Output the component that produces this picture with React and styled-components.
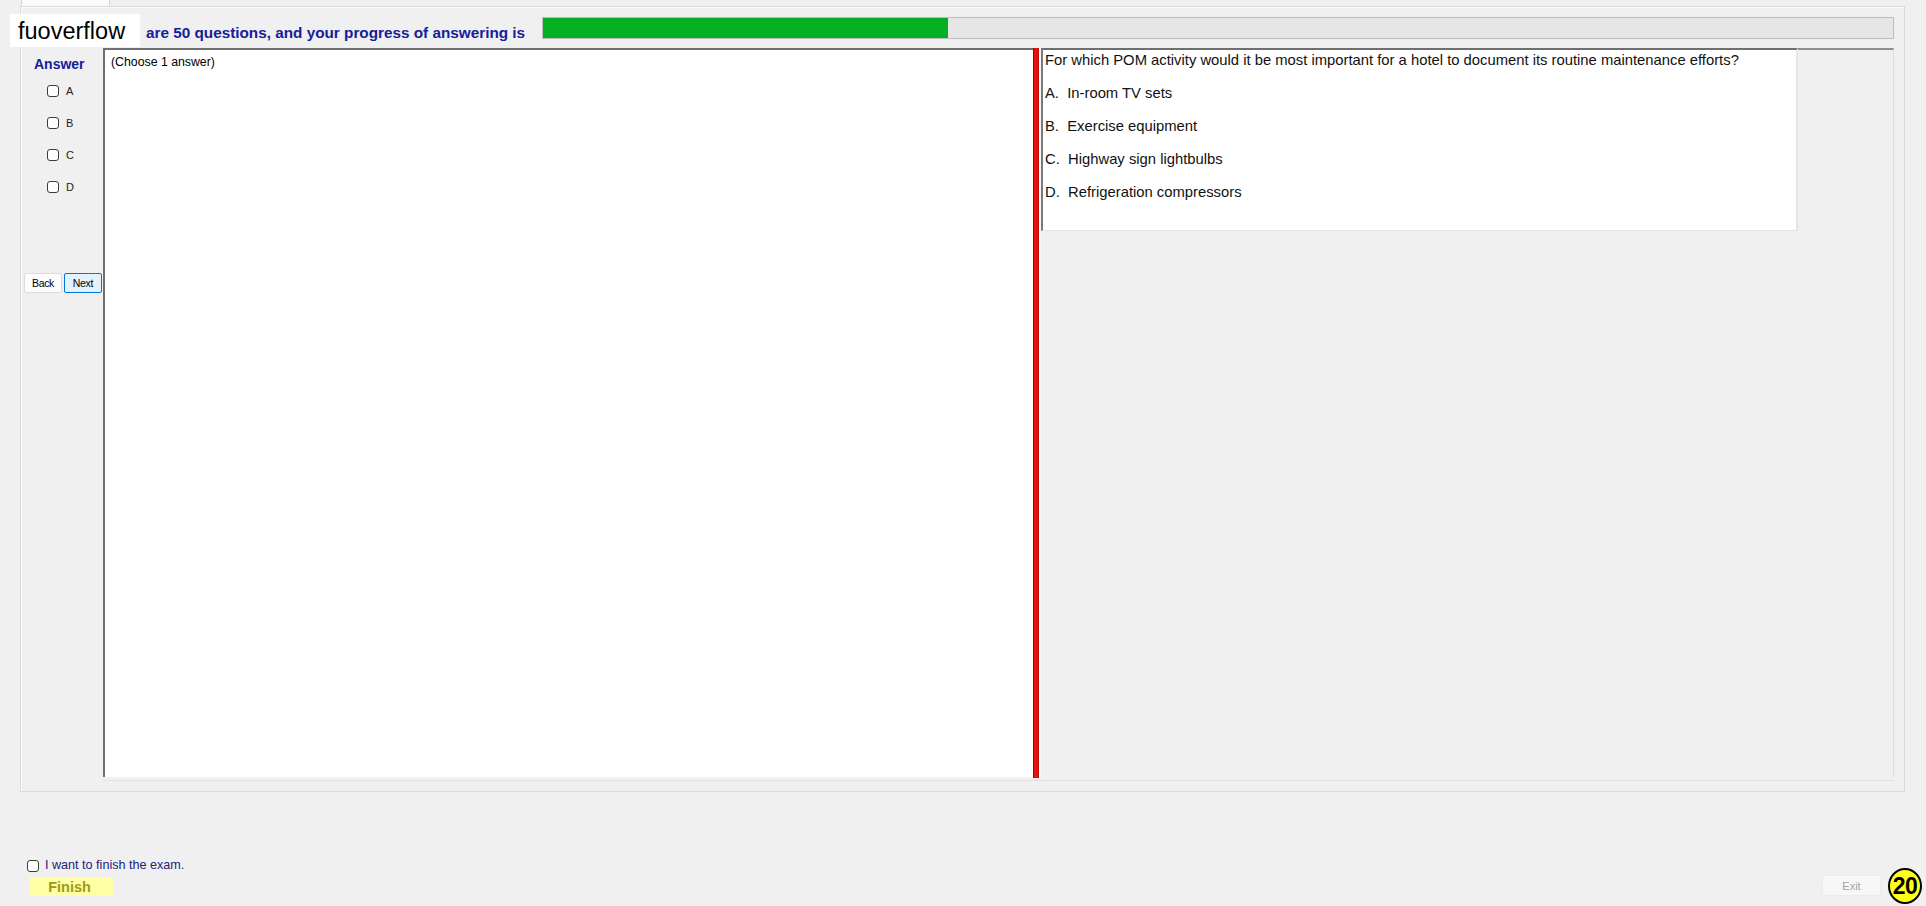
import React from "react";
import styled, { createGlobalStyle } from "styled-components";

const Global = createGlobalStyle`
  html, body { margin: 0; padding: 0; background: #f0f0f0; }
  body { font-family: "Liberation Sans", Arial, sans-serif; }
  * { box-sizing: border-box; }
`;

const Page = styled.div`
  position: relative;
  width: 1926px;
  height: 906px;
  background: #f0f0f0;
  display: flex;
  flex-direction: column;
  overflow: hidden;
  color: #000;
`;

const TabStrip = styled.div`
  height: 6px;
  display: flex;
  padding-left: 21px;
`;

const TabHead = styled.div`
  width: 89px;
  height: 6px;
  background: #fafafa;
  border-left: 1px solid #d6d6d6;
  border-right: 1px solid #d6d6d6;
`;

const TabPage = styled.section`
  margin-left: 20px;
  width: 1885px;
  height: 786px;
  border: 1px solid #dadada;
  box-shadow: inset 1px 1px 0 #fbfbfb;
  display: flex;
  flex-direction: column;
  padding: 10px 10px 0 1px;
`;

/* site stamp laid over the header's first word */
const Watermark = styled.div`
  position: absolute;
  left: 10px;
  top: 14px;
  width: 130px;
  height: 33px;
  background: #fff;
  padding: 1px 0 0 8px;
  font-size: 23.5px;
  line-height: 32px;
  color: #000;
  white-space: nowrap;
`;

const Header = styled.div`
  display: flex;
  align-items: flex-start;
  height: 22px;
`;

const Lead = styled.div`
  margin-left: 124px;
  padding-top: 5px;
  font-size: 15.3px;
  font-weight: bold;
  line-height: 22px;
  color: #16209a;
  white-space: nowrap;
`;

const Track = styled.div`
  margin-left: auto;
  width: 1352px;
  height: 22px;
  background: #e6e6e6;
  border: 1px solid #bcbcbc;
  display: flex;
`;

const Fill = styled.div`
  height: 100%;
  background: #06b025;
`;

const Body = styled.div`
  margin-top: 9px;
  display: flex;
  height: 733px;
`;

const Side = styled.aside`
  width: 81px;
  display: flex;
  flex-direction: column;
  padding-top: 8px;
`;

const AnswerLabel = styled.div`
  margin-left: 12px;
  font-size: 14px;
  font-weight: bold;
  line-height: 16px;
  color: #16209a;
`;

const OptionList = styled.div`
  margin-top: 3px;
  display: flex;
  flex-direction: column;
`;

const OptionRow = styled.label`
  height: 32px;
  padding-left: 25px;
  display: flex;
  align-items: center;
  gap: 7px;
  font-size: 11px;
  color: #222;
`;

const Box = styled.span`
  display: inline-block;
  width: 12px;
  height: 12px;
  border: 1px solid #3c3c3c;
  border-radius: 3px;
  background: #fff;
  flex: none;
`;

const NavRow = styled.div`
  margin-top: 70px;
  padding-left: 2px;
  display: flex;
  gap: 2px;
`;

const NavButton = styled.button`
  width: 38px;
  height: 20px;
  padding: 0;
  font-family: "Liberation Sans", Arial, sans-serif;
  font-size: 10.5px;
  letter-spacing: -0.3px;
  color: #000;
  border-radius: 2px;
  border: 1px solid ${(p) => (p.$focused ? "#0078d7" : "#dcdcdc")};
  background: ${(p) => (p.$focused ? "#e5f1fb" : "#fdfdfd")};
`;

const Main = styled.div`
  flex: 1;
  display: flex;
  flex-direction: column;
`;

const Panes = styled.div`
  display: flex;
  height: 730px;
`;

const Rule = styled.div`
  margin-top: 2px;
  height: 1px;
  background: #e1e1e1;
`;

const AnswerPane = styled.div`
  width: 930px;
  height: 729px;
  background: #fff;
  border-top: 2px solid #6f6f6f;
  border-left: 2px solid #6f6f6f;
  padding: 5px 6px;
  font-size: 12.3px;
  line-height: 14px;
`;

const Splitter = styled.div`
  width: 6px;
  background: #e3120e;
  border-left: 1px solid #a80000;
  border-right: 1px solid #c40a06;
`;

const RightPane = styled.div`
  flex: 1;
  height: 729px;
  display: flex;
  align-items: flex-start;
  border-left: 2px solid #fff;
`;

const QuestionBox = styled.div`
  width: 757px;
  height: 183px;
  background: #fff;
  border-top: 2px solid #6f6f6f;
  border-left: 2px solid #7a7a7a;
  border-right: 2px solid #e4e4e4;
  border-bottom: 1px solid #e4e4e4;
  padding: 2px 0 0 2px;
  font-size: 14.8px;
  line-height: 17px;
  color: #111;
`;

const Prompt = styled.div`
  white-space: nowrap;
`;

const Choice = styled.div`
  margin-top: 16px;
  white-space: pre;
`;

const Rest = styled.div`
  flex: 1;
  height: 100%;
  border-top: 2px solid #8e8e8e;
  border-right: 1px solid #dcdcdc;
`;

const Footer = styled.footer`
  flex: 1;
  display: flex;
  justify-content: space-between;
  align-items: flex-end;
  padding: 0 4px 2px 0;
`;

const FinishGroup = styled.div`
  display: flex;
  flex-direction: column;
  margin-bottom: 7px;
`;

const FinishCheck = styled.label`
  margin-left: 27px;
  display: flex;
  align-items: center;
  gap: 6px;
  font-size: 12.6px;
  line-height: 15px;
  color: #22227e;
`;

const FinishButton = styled.button`
  margin: 4px 0 1px 30px;
  width: 83px;
  height: 19px;
  padding: 0 4px 0 0;
  border: none;
  background: #ffffa6;
  font-family: "Liberation Sans", Arial, sans-serif;
  font-size: 14.5px;
  font-weight: bold;
  color: #9e9a14;
`;

const ExitGroup = styled.div`
  display: flex;
  align-items: flex-end;
  gap: 7px;
`;

const ExitButton = styled.button`
  margin-bottom: 8px;
  width: 59px;
  height: 21px;
  padding: 0;
  border: 1px solid #ececec;
  background: #f7f7f7;
  font-family: "Liberation Sans", Arial, sans-serif;
  font-size: 11px;
  color: #a2a2a2;
`;

const Counter = styled.div`
  width: 34px;
  height: 36px;
  border-radius: 50%;
  border: 2px solid #000;
  background: #ffff1a;
  display: flex;
  align-items: center;
  justify-content: center;
  font-size: 23px;
  font-weight: bold;
  letter-spacing: -0.5px;
  color: #000;
`;

const letters = ["A", "B", "C", "D"];

const question = {
  text: "For which POM activity would it be most important for a hotel to document its routine maintenance efforts?",
  choices: [
    "In-room TV sets",
    "Exercise equipment",
    "Highway sign lightbulbs",
    "Refrigeration compressors",
  ],
};

const total = 50;
const answered = 15;

export default function App() {
  return (
    <Page>
      <Global />
      <TabStrip>
        <TabHead />
      </TabStrip>
      <TabPage>
        <Header>
          <Lead>are 50 questions, and your progress of answering is</Lead>
          <Track>
            <Fill style={{ width: `${(answered / total) * 100}%` }} />
          </Track>
        </Header>
        <Body>
          <Side>
            <AnswerLabel>Answer</AnswerLabel>
            <OptionList>
              {letters.map((l) => (
                <OptionRow key={l}>
                  <Box />
                  {l}
                </OptionRow>
              ))}
            </OptionList>
            <NavRow>
              <NavButton>Back</NavButton>
              <NavButton $focused>Next</NavButton>
            </NavRow>
          </Side>
          <Main>
            <Panes>
              <AnswerPane>(Choose 1 answer)</AnswerPane>
              <Splitter />
              <RightPane>
                <QuestionBox>
                  <Prompt>{question.text}</Prompt>
                  {question.choices.map((c, i) => (
                    <Choice key={c}>{`${letters[i]}.  ${c}`}</Choice>
                  ))}
                </QuestionBox>
                <Rest />
              </RightPane>
            </Panes>
            <Rule />
          </Main>
        </Body>
      </TabPage>
      <Footer>
        <FinishGroup>
          <FinishCheck>
            <Box />
            I want to finish the exam.
          </FinishCheck>
          <FinishButton>Finish</FinishButton>
        </FinishGroup>
        <ExitGroup>
          <ExitButton>Exit</ExitButton>
          <Counter>20</Counter>
        </ExitGroup>
      </Footer>
      <Watermark>fuoverflow</Watermark>
    </Page>
  );
}
